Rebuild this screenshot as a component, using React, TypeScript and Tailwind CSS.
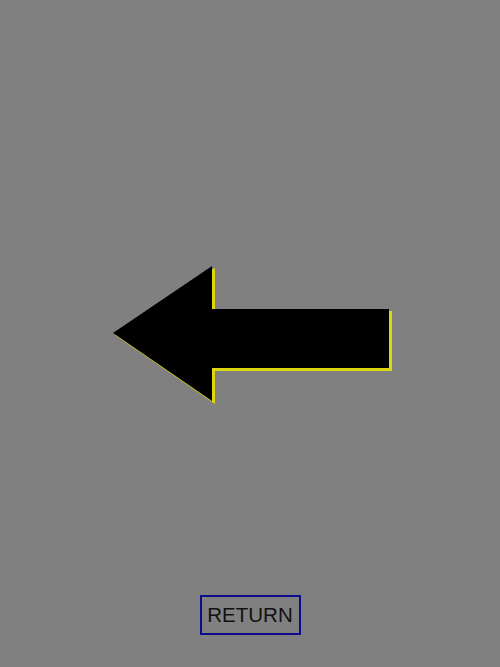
export default function App() {
  return (
    <div className="flex h-[667px] w-full flex-col items-center bg-[#808080] font-['Liberation_Sans',Arial,sans-serif]">
      {/* Back arrow, yellow edge sits 2px below/right of the black fill */}
      <svg className="block h-[595px] w-[500px] shrink-0" viewBox="0 0 500 595">
        <polygon
          points="115,335 215,268 215,311 392,311 392,371 215,371 215,404"
          fill="#e8e000"
          opacity="0.9"
        />
        <polygon points="113,333 212,266 212,309 389,309 389,368 212,368 212,401" fill="#000" />
      </svg>
      <button
        type="button"
        className="flex h-[40px] w-[101px] items-center justify-center border-2 border-[#0c0c8c] text-[20.5px] leading-none text-[#111]"
      >
        RETURN
      </button>
    </div>
  )
}
